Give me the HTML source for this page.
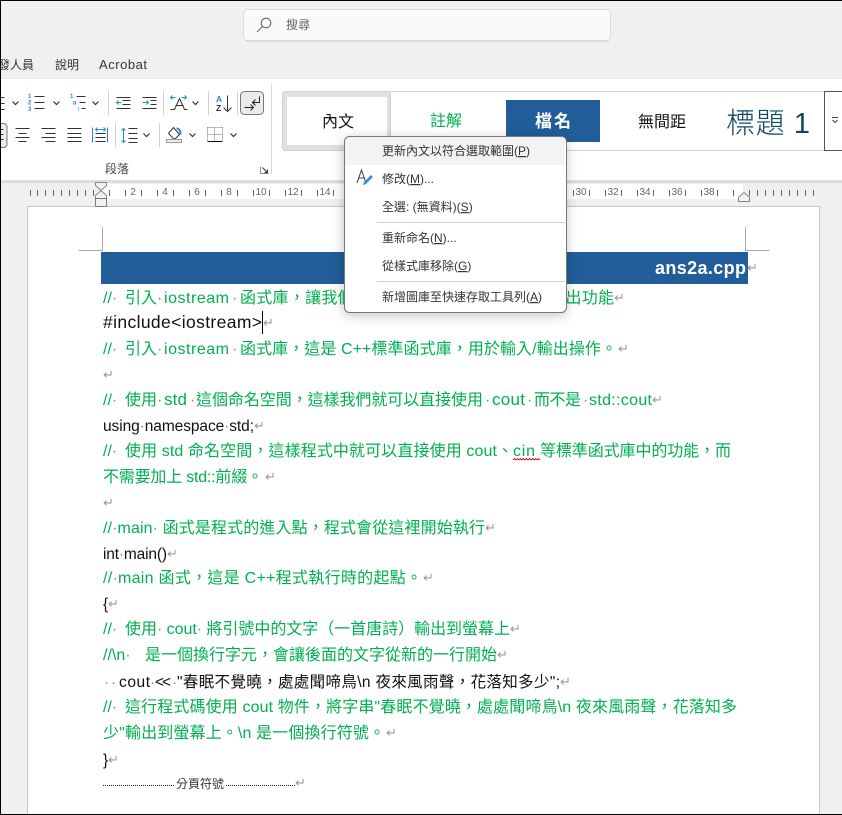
<!DOCTYPE html>
<html><head><meta charset="utf-8"><style>
html,body{margin:0;padding:0;background:#f0f0f0;width:842px;height:815px;overflow:hidden}
svg{display:block;position:absolute;left:0;top:0}
text{font-family:"Liberation Sans","Noto Sans CJK TC",sans-serif;white-space:pre}
.g{fill:#00b050;font-size:16px}
.b{fill:#111;font-size:17.5px}
.s{fill:#111;font-size:15.5px}
.p{fill:#999;font-size:13px;font-family:"DejaVu Sans",sans-serif}
.d{fill:#888}
.m{fill:#333;font-size:12px}
.r{fill:#666;font-size:10px;text-anchor:middle}
.ic{fill:none;stroke:#333;stroke-width:1}
.bl{fill:none;stroke:#2b88d8;stroke-width:1}
.ch{fill:none;stroke:#333;stroke-width:1.2}
.n{fill:#2b88d8;font-size:6px;font-weight:bold}
</style></head><body>
<svg width="842" height="815" viewBox="0 0 842 815" xmlns="http://www.w3.org/2000/svg">
<rect width="842" height="815" fill="#f0f0f0"/>
<!-- search -->
<rect x="243.5" y="9.5" width="367" height="31" rx="4" fill="#fafafa" stroke="#dcdcdc"/>
<path d="M245 41h364" stroke="#cfcfcf"/>
<circle cx="266" cy="23" r="4.8" fill="none" stroke="#666" stroke-width="1.1"/>
<path d="M262.500 26.500l-5.500 5.500" stroke="#666" stroke-width="1.100" fill="none"/>
<text x="286" y="29" font-size="12" fill="#666">搜尋</text>
<!-- tabs -->
<text x="-2" y="69" font-size="12" fill="#333" textLength="36">發人員</text>
<text x="55" y="69" font-size="12" fill="#333">說明</text>
<text x="99" y="69" font-size="13" fill="#333" textLength="48">Acrobat</text>
<!-- ribbon -->
<rect x="0" y="79" width="842" height="101" fill="#fff"/>
<path d="M0 78.500h842" stroke="#e6e6e6"/>
<rect x="0" y="180" width="842" height="3" fill="#dcdcdc"/>
<path d="M108.500 91v24M163.500 91v24M208.500 91v24M237.500 91v24M115.500 123v24M159.500 123v24" stroke="#d0d0d0"/>
<rect x="240.500" y="91.500" width="23" height="23" rx="4" fill="#ebebeb" stroke="#777"/>
<path d="M-1 123.500h4.500a3.500 3.500 0 0 1 3.500 3.500v17a3.500 3.500 0 0 1-3.500 3.500H-1" fill="#ececec" stroke="#777"/>
<text class="n" x="28" y="98">1</text><text class="n" x="28" y="104.500">2</text><text class="n" x="28" y="111">3</text>
<text class="n" x="70" y="98">1</text><text class="n" x="73" y="104.500">a</text>
<text x="216" y="102" font-size="8.500" font-weight="bold" fill="#2b88d8">A</text>
<text x="216" y="111" font-size="8.500" font-weight="bold" fill="#333">Z</text>
<g transform="translate(.5,.5)">
<path class="ic" d="M0 97h4M0 103h4M0 109h4"/>
<path class="ch" d="M12 101l3 3 3-3"/>
<path class="ic" d="M34 96h10M34 102h10M34 108h10"/>
<path class="ch" d="M53 101l3 3 3-3"/>
<path class="bl" d="M78 107v1M78 109v1"/>
<path class="ic" d="M76 96h9M79 102h6M81 108h4"/>
<path class="ch" d="M92 101l3 3 3-3"/>
<path class="ic" d="M116 97h14M122 100h8M122 104h8M116 108h14"/>
<path class="bl" d="M121 102h-5M118 100l-2 2 2 2"/>
<path class="ic" d="M142 97h14M150 100h6M150 104h6M142 108h14"/>
<path class="bl" d="M142 102h6M146 100l2 2-2 2"/>
<path class="ic" d="M170 109h4l5-11 5 11h3M175 105h8"/>
<path class="bl" d="M170 97h5M172 95l-2 2 2 2M181 97h5M184 95l2 2-2 2"/>
<path class="ch" d="M192 101l3 3 3-3"/>
<path class="ic" d="M227 95v16M223 107l4 4 4-4"/>
<path class="ic" d="M259 96v6h-7M255 99l-3 3 3 3M244 107h9M250 104l3 3-3 3" style="stroke:#222"/>
<path class="ic" d="M0 129h3M0 134h3M0 139h3"/>
<path class="ic" d="M15 128h14M18 133h8M15 137h14M18 141h8"/>
<path class="ic" d="M41 128h14M45 133h10M41 137h14M45 141h10"/>
<path class="ic" d="M67 128h14M67 133h14M67 137h14M67 141h14"/>
<path class="bl" d="M92 127v15M107 127v15M95 129h10M97 127l-2 2 2 2M103 127l2 2-2 2"/>
<path class="ic" d="M95 133h10M95 137h10M95 141h10"/>
<path class="bl" d="M123 128v14M121 130l2-2 2 2M121 140l2 2 2-2"/>
<path class="ic" d="M128 128h9M128 133h9M128 138h9M128 142h9"/>
<path class="ch" d="M143 133l3 3 3-3"/>
<path class="ic" d="M173 127l-5 6 6 6 5-5z"/>
<path class="bl" d="M176 128c3 0 4 3 4 6" style="stroke-width:2"/>
<rect x="166" y="139" width="15" height="3" fill="#ececec" stroke="#999"/>
<path class="ch" d="M189 133l3 3 3-3"/>
<path d="M207 127h15M207 134h15M207 127v14M214 127v14M222 127v14" fill="none" stroke="#777" stroke-dasharray="1 1"/>
<path d="M207 141h15" stroke="#111"/>
<path class="ch" d="M230 133l3 3 3-3"/>
<path d="M260 166v7h8" fill="none" stroke="#888"/>
<path d="M262 167l5 5M264 172h3v-3" fill="none" stroke="#333"/>
</g>
<text x="105" y="173" font-size="12" fill="#444">段落</text>
<text x="543" y="173" font-size="12" fill="#444">樣式</text>
<path d="M271.500 84v90" stroke="#dcdcdc"/>
<!-- gallery -->
<path d="M390 91.500h434M390 150.500h434" stroke="#cfcfcf"/>
<rect x="282.500" y="91.500" width="108" height="59" rx="3" fill="#e0e0e0" stroke="#cfcfcf"/>
<rect x="287" y="97" width="100" height="48" fill="#fff"/>
<text x="322" y="127" font-size="16" fill="#111">內文</text>
<text x="430" y="126" font-size="16" fill="#00b050">註解</text>
<rect x="506" y="100" width="94" height="42" fill="#215e99"/>
<text x="535" y="127" font-size="17" font-weight="bold" fill="#fff" textLength="36">檔名</text>
<text x="638" y="127" font-size="16" fill="#111">無間距</text>
<text x="726" y="133" font-size="29" font-weight="300" fill="#0f4761" textLength="84">標題 1</text>
<rect x="824.500" y="91.500" width="20" height="59" fill="#fff" stroke="#555"/>
<path d="M832 117.500h6M832.500 120l2.500 2.500 2.500-2.500" fill="none" stroke="#444"/>
<!-- ruler -->
<rect x="0" y="183" width="842" height="24" fill="#f0f0f0"/>
<rect x="101" y="184" width="642" height="15" fill="#fff"/>
<path stroke="#666" fill="none" d="M30.500 190v6M37.500 190v6M45.500 190v6M53.500 190v6M61.500 190v6M69.500 190v6M77.500 190v6M85.500 190v6M93.500 190v6M109.500 190v6M125.500 190v6M141.500 190v6M157.500 190v6M173.500 190v6M189.500 190v6M205.500 190v6M221.500 190v6M237.500 190v6M253.500 190v6M269.500 190v6M285.500 190v6M301.500 190v6M317.500 190v6M333.500 190v6M573.500 190v6M589.500 190v6M605.500 190v6M621.500 190v6M637.500 190v6M653.500 190v6M669.500 190v6M685.500 190v6M701.500 190v6M717.500 190v6M733.500 190v6M749.500 190v6M757.500 190v6M765.500 190v6M773.500 190v6M781.500 190v6M789.500 190v6M797.500 190v6M805.500 190v6M813.500 190v6"/>
<text class="r" x="133" y="195">2</text><text class="r" x="165" y="195">4</text><text class="r" x="197" y="195">6</text><text class="r" x="229" y="195">8</text><text class="r" x="261" y="195">10</text><text class="r" x="293" y="195">12</text><text class="r" x="325" y="195">14</text><text class="r" x="581" y="195">30</text><text class="r" x="613" y="195">32</text><text class="r" x="645" y="195">34</text><text class="r" x="677" y="195">36</text><text class="r" x="709" y="195">38</text>
<path d="M95.500 182.500h11v3l-5.500 5-5.500-5zM95.500 198.500v-3l5.500-5 5.500 5v3z" fill="#f2f2f2" stroke="#888"/>
<rect x="95.500" y="198.500" width="11" height="8" fill="#f2f2f2" stroke="#777"/>
<path d="M738.500 201.500v-4l5.500-5 5.500 5v4z" fill="#f2f2f2" stroke="#888"/>
<!-- page -->
<rect x="27.500" y="206.500" width="792" height="620" fill="#fff" stroke="#c8c8c8"/>
<path d="M95.500 206.500h11" stroke="#777"/>
<path d="M102.500 227v23.500H79M745.500 227v23.500H769" fill="none" stroke="#a8a8a8"/>
<rect x="101" y="252" width="647" height="32" fill="#215e99"/>
<text x="655" y="274" font-size="18" font-weight="bold" fill="#fff" textLength="91">ans2a.cpp</text>
<text class="p" x="747" y="272">↵</text>
<!-- body -->
<text class="g" x="103" y="303">//<tspan class="d">·</tspan></text><text class="g" x="125" y="303">引入<tspan class="d">·</tspan></text><text class="g" x="164" y="303" textLength="65">iostream</text><text class="d" x="232" y="303">·</text>
<text class="g" x="240" y="303" textLength="374">函式庫，讓我們可以使用其中定義的輸入和輸出功能</text><text class="p" x="614" y="302">↵</text>
<text class="b" x="103" y="328" textLength="159">#include&lt;iostream&gt;</text><text class="p" x="263" y="327">↵</text>
<path d="M262.500 311v23" stroke="#000"/>
<text class="g" x="103" y="354">//<tspan class="d">·</tspan></text><text class="g" x="125" y="354">引入<tspan class="d">·</tspan></text><text class="g" x="164" y="354" textLength="65">iostream</text><text class="d" x="232" y="354" font-size="16">·</text>
<text class="g" x="240" y="354" textLength="377">函式庫，這是 C++標準函式庫，用於輸入/輸出操作。</text><text class="p" x="618" y="353">↵</text>
<text class="p" x="103" y="379">↵</text>
<text class="g" x="103" y="405">//<tspan class="d">·</tspan></text><text class="g" x="125" y="405">使用<tspan class="d">·</tspan></text><text class="g" x="164" y="405" style="font-size:17px" textLength="23">std</text><text class="d" x="190" y="405" font-size="16">·</text>
<text class="g" x="196" y="405" textLength="287">這個命名空間，這樣我們就可以直接使用</text><text class="d" x="485" y="405" font-size="16">·</text><text class="g" x="492" y="405" style="font-size:17px" textLength="33">cout</text><text class="d" x="527" y="405" font-size="16">·</text><text class="g" x="534" y="405" textLength="47">而不是</text><text class="d" x="583" y="405" font-size="16">·</text><text class="g" x="589" y="405" textLength="63">std::cout</text><text class="p" x="652" y="404">↵</text>
<text class="s" x="103" y="431" textLength="151">using<tspan class="d">·</tspan>namespace<tspan class="d">·</tspan>std;</text><text class="p" x="254" y="430">↵</text>
<text class="g" x="103" y="456">//<tspan class="d">·</tspan></text><text class="g" x="125" y="456" textLength="388">使用 std 命名空間，這樣程式中就可以直接使用 cout、</text><text class="g" x="513" y="456" textLength="22">cin</text><text class="g" x="540" y="456" textLength="191">等標準函式庫中的功能，而</text>
<path d="M513 460l1.500-1.500 1.500 1.500 1.500-1.500 1.500 1.500 1.500-1.500 1.500 1.500 1.500-1.500 1.500 1.500 1.500-1.500 1.500 1.500 1.500-1.500 1.500 1.500 1.500-1.500 1.500 1.500 1.500-1.500 1.500 1.500 1.500-1.500 1.500 1.500" fill="none" stroke="#e01010" stroke-width=".9"/>
<text class="g" x="103" y="482" textLength="160">不需要加上 std::前綴。</text><text class="p" x="265" y="481">↵</text>
<text class="p" x="103" y="507">↵</text>
<text class="g" x="103" y="533" textLength="382">//<tspan class="d">·</tspan>main<tspan class="d">·</tspan> 函式是程式的進入點，程式會從這裡開始執行</text><text class="p" x="485" y="532">↵</text>
<text class="s" x="103" y="559" textLength="64">int<tspan class="d">·</tspan>main()</text><text class="p" x="167" y="558">↵</text>
<text class="g" x="103" y="583" textLength="319">//<tspan class="d">·</tspan>main 函式，這是 C++程式執行時的起點。</text><text class="p" x="423" y="582">↵</text>
<text class="s" x="103" y="609">{</text><text class="p" x="108" y="608">↵</text>
<text class="g" x="103" y="634">//<tspan class="d">·</tspan></text><text class="g" x="125" y="634" textLength="385">使用<tspan class="d">·</tspan> cout<tspan class="d">·</tspan> 將引號中的文字（一首唐詩）輸出到螢幕上</text><text class="p" x="510" y="633">↵</text>
<text class="g" x="103" y="660">//\n<tspan class="d">·</tspan></text><text class="g" x="145" y="660" textLength="352">是一個換行字元，會讓後面的文字從新的一行開始</text><text class="p" x="497" y="659">↵</text>
<text class="d" x="104" y="687" font-size="15">·</text><text class="d" x="111" y="687" font-size="15">·</text><text class="s" x="119" y="687" textLength="31">cout</text><text class="d" x="150" y="687" font-size="15">·</text><text class="s" x="155" y="687" textLength="16">&lt;&lt;</text><text class="d" x="172" y="687" font-size="15">·</text><text class="s" x="177" y="687" textLength="383">"春眠不覺曉，處處聞啼鳥\n 夜來風雨聲，花落知多少";</text><text class="p" x="560" y="686">↵</text>
<text class="g" x="103" y="712">//<tspan class="d">·</tspan></text><text class="g" x="125" y="712" textLength="612">這行程式碼使用 cout 物件，將字串"春眠不覺曉，處處聞啼鳥\n 夜來風雨聲，花落知多</text>
<text class="g" x="103" y="738" textLength="282">少"輸出到螢幕上。\n 是一個換行符號。</text><text class="p" x="386" y="737">↵</text>
<text class="s" x="103" y="765">}</text><text class="p" x="108" y="764">↵</text>
<path d="M103 785.500h71M226 785.500h69" stroke="#222" stroke-dasharray="1 1"/>
<text x="176" y="788" font-size="12" fill="#333">分頁符號</text><text class="p" x="295" y="787">↵</text>
<!-- menu -->
<rect x="344" y="136" width="222" height="176" rx="5" fill="#fff" style="filter:drop-shadow(0 3px 6px rgba(0,0,0,.25))"/>
<path d="M345 142a5 5 0 0 1 5-5h210a5 5 0 0 1 5 5v23H345z" fill="#f3f3f3"/>
<rect x="344.500" y="136.500" width="222" height="176" rx="5" fill="none" stroke="#777"/>
<text class="m" x="382" y="155">更新內文以符合選取範圍(<tspan text-decoration="underline">P</tspan>)</text>
<text class="m" x="382" y="183">修改(<tspan text-decoration="underline">M</tspan>)...</text>
<text class="m" x="382" y="211">全選: (無資料)(<tspan text-decoration="underline">S</tspan>)</text>
<path d="M377 222.500h188M377 281.500h188" stroke="#d0d0d0"/>
<text class="m" x="382" y="242">重新命名(<tspan text-decoration="underline">N</tspan>)...</text>
<text class="m" x="382" y="270">從樣式庫移除(<tspan text-decoration="underline">G</tspan>)</text>
<text class="m" x="382" y="301">新增圖庫至快速存取工具列(<tspan text-decoration="underline">A</tspan>)</text>
<path d="M357 183l4.500-13 4.500 13M358.500 178h6" fill="none" stroke="#444" stroke-width="1.100"/>
<path d="M363 185l1-3 7-7 2 2-7 7z" fill="#3a8fd6"/>
<!-- frame -->
<rect x="0" y="0" width="842" height="1" fill="#000"/>
<rect x="0" y="0" width="1" height="815" fill="#000"/>
<rect x="0" y="814" width="842" height="1" fill="#000"/>
</svg>
</body></html>
